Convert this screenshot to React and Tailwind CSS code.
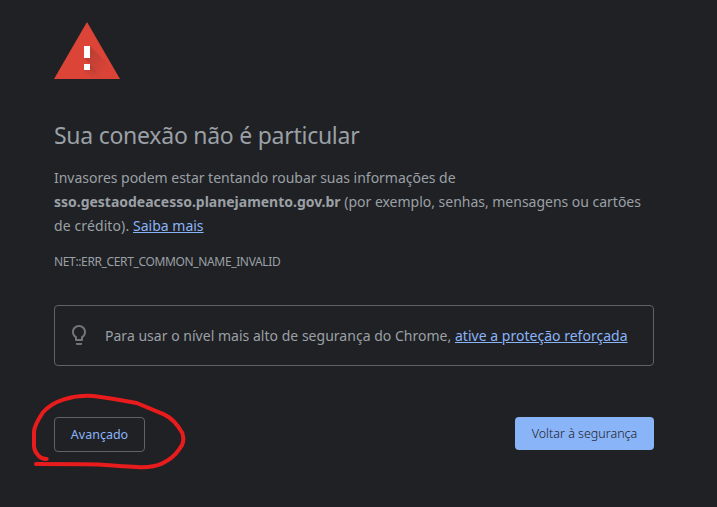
function WarningIcon() {
  return (
    <svg width="66" height="57" viewBox="0 0 66 57" className="block" aria-hidden="true">
      <defs>
        <linearGradient id="shade" x1="30" y1="26" x2="52" y2="48" gradientUnits="userSpaceOnUse">
          <stop offset="0" stopColor="#262626" stopOpacity="0.22" />
          <stop offset="1" stopColor="#262626" stopOpacity="0.01" />
        </linearGradient>
        <clipPath id="tri">
          <path d="M33 0L66 57H0z" />
        </clipPath>
      </defs>
      <path d="M33 0L66 57H0z" fill="#db4437" />
      <g clipPath="url(#tri)" fill="url(#shade)">
        <path d="M36 24L69 57H46L36 48V42H36L30 36H36z" />
        <path d="M30 48H36V42L51 57H39z" />
      </g>
      <path d="M30 24h6v12h-6zM30 42h6v6h-6z" fill="#fff" />
    </svg>
  );
}

function BulbIcon() {
  return (
    <svg width="24" height="24" viewBox="0 0 24 24" fill="#757575" className="mb-px shrink-0" aria-hidden="true">
      <path d="M9 21c0 .55.45 1 1 1h4c.55 0 1-.45 1-1v-1H9v1zm3-19C8.14 2 5 5.14 5 9c0 2.38 1.19 4.47 3 5.74V17c0 .55.45 1 1 1h6c.55 0 1-.45 1-1v-2.26c1.81-1.27 3-3.36 3-5.74 0-3.86-3.14-7-7-7zm2.85 11.1l-.85.6V16h-4v-2.3l-.85-.6C7.8 12.16 7 10.63 7 9c0-2.76 2.24-5 5-5s5 2.24 5 5c0 1.63-.8 3.16-2.15 4.1z" />
    </svg>
  );
}

export default function App() {
  return (
    <main className="relative h-[507px] w-[717px] overflow-hidden bg-[#202124] pl-[54px] pt-[22px] font-['Noto_Sans','Open_Sans',sans-serif] text-[#9aa0a6]">
      <div className="w-[600px] whitespace-nowrap">
        <WarningIcon />
        <h1 className="mt-[42px] text-[23px] leading-[29px] tracking-[-0.26px]">Sua conexão não é particular</h1>
        <div className="mt-[16px] text-[14px] leading-[24px]">
          <p className="tracking-[-0.02px]">Invasores podem estar tentando roubar suas informações de</p>
          <p className="tracking-[-0.015px]">
            <b>sso.gestaodeacesso.planejamento.gov.br</b> <span>(por exemplo, senhas, mensagens ou cartões</span>
          </p>
          <p>
            <span className="tracking-[0.11px]">de crédito). </span>
            <a href="#" className="text-[#8ab4f8] underline">Saiba mais</a>
          </p>
        </div>
        <p className="mt-[14px] text-[12px] leading-[20px] tracking-[-0.36px]">NET::ERR_CERT_COMMON_NAME_INVALID</p>
        <div className="mt-[33px] flex h-[61px] items-center rounded-[4px] border border-[#5f6368] pl-[12px]">
          <BulbIcon />
          <p className="ml-[14px] text-[14px] leading-[24px] tracking-[0.02px]">
            <span>Para usar o nível mais alto de segurança do Chrome, </span>
            <a href="#" className="text-[#8ab4f8] underline">ative a proteção reforçada</a>
          </p>
        </div>
        <div className="mt-[51px] flex items-start justify-between">
          <button className="h-[35px] w-[91px] rounded-[4px] border border-[#5f6368] pt-[2px] text-[12.5px] text-[#8ab4f8]">Avançado</button>
          <button className="h-[33px] w-[139px] rounded-[4px] bg-[#8ab4f8] pt-[2px] text-[12.5px] font-light text-[#202124]">Voltar à segurança</button>
        </div>
      </div>
      <svg className="pointer-events-none absolute left-[20px] top-[385px]" width="180" height="95" viewBox="0 0 540 285" fill="none" stroke="#e81c1c" strokeWidth="12" strokeLinecap="round" strokeLinejoin="round" aria-hidden="true">
        <path d="M80 222C62 224 43 203 42 184V140C43 120 61 94 69 82C85 63 110 50 132 43C165 33 205 30 237 35C275 40 310 46 350 54L432 88C462 102 477 126 487 144C493 163 489 180 479 191C465 212 447 226 427 235C405 245 375 248 350 246C290 243 240 238 195 238L48 237" />
      </svg>
    </main>
  );
}
